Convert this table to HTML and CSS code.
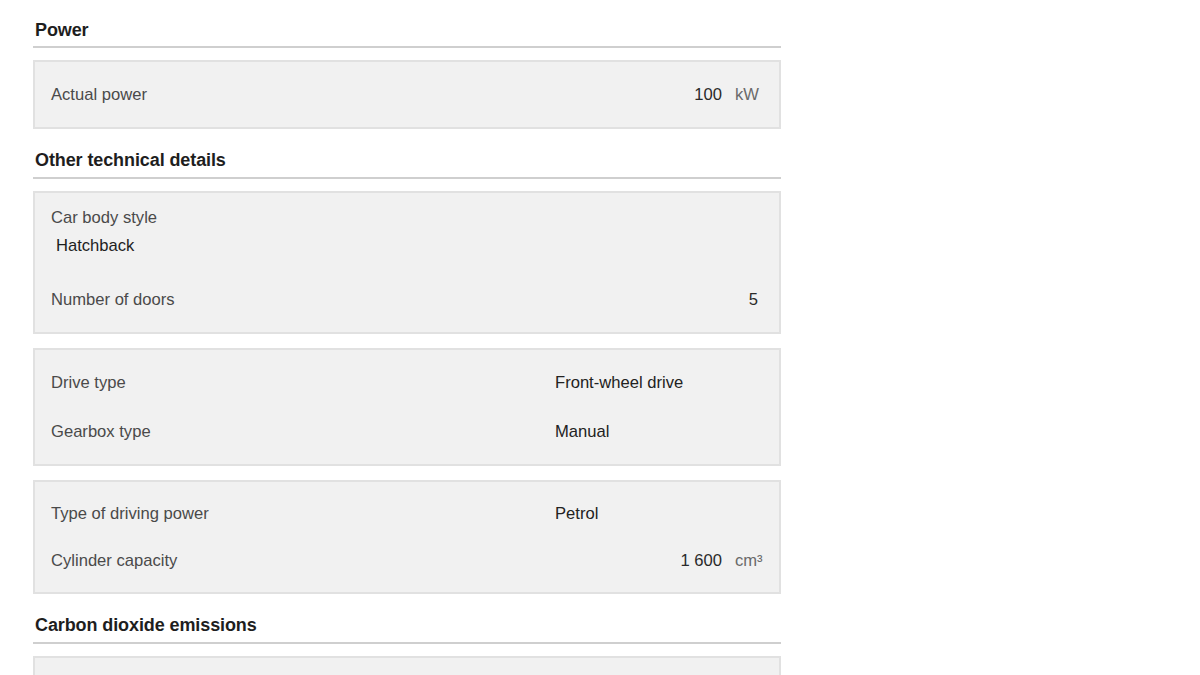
FILE: index.html
```html
<!DOCTYPE html>
<html lang="en">
<head>
<meta charset="utf-8">
<title>Technical details</title>
<link rel="stylesheet" href="styles.css">
</head>
<body>
<div class="page">
  <h2 class="section-title first">Power</h2>
  <div class="box">
    <div class="row">
      <span class="label">Actual power</span>
      <span class="num"><span class="amount">100</span><span class="unit">kW</span></span>
    </div>
  </div>

  <h2 class="section-title">Other technical details</h2>
  <div class="box">
    <div class="stacked">
      <div class="stack-label">Car body style</div>
      <div class="stack-value">Hatchback</div>
    </div>
    <div class="row">
      <span class="label">Number of doors</span>
      <span class="num"><span class="amount">5</span></span>
    </div>
  </div>
  <div class="box">
    <div class="row grid">
      <span class="label">Drive type</span>
      <span class="value">Front-wheel drive</span>
    </div>
    <div class="row grid">
      <span class="label">Gearbox type</span>
      <span class="value">Manual</span>
    </div>
  </div>
  <div class="box compact">
    <div class="row grid">
      <span class="label">Type of driving power</span>
      <span class="value">Petrol</span>
    </div>
    <div class="row">
      <span class="label">Cylinder capacity</span>
      <span class="num"><span class="amount">1 600</span><span class="unit">cm³</span></span>
    </div>
  </div>

  <h2 class="section-title">Carbon dioxide emissions</h2>
  <div class="box">
    <div class="row">
      <span class="label">&nbsp;</span>
    </div>
  </div>
</div>
</body>
</html>
```

FILE: styles.css
```css
html, body {
  margin: 0;
  padding: 0;
  background: #ffffff;
}

body {
  font-family: "Liberation Sans", Arial, sans-serif;
  font-size: 16.6px;
  color: #333333;
}

.page {
  width: 748px;
  margin-left: 33px;
  padding-top: 16px;
}

.section-title {
  margin: 18px 0 12px 0;
  padding: 1px 0 5px 2px;
  font-size: 18px;
  line-height: 24px;
  font-weight: bold;
  color: #1e1e1e;
  border-bottom: 2px solid #cfcfcf;
  letter-spacing: -0.1px;
}

.section-title.first {
  margin-top: 0;
  padding-top: 2px;
  padding-bottom: 4px;
}

.box {
  background: #f1f1f1;
  border: 2px solid #e1e1e1;
  padding: 8px 21px 8px 16px;
  margin-bottom: 14px;
}

.row {
  display: flex;
  align-items: center;
  justify-content: space-between;
  height: 49px;
}

.box.compact .row {
  height: 47px;
}

.row.grid {
  display: grid;
  grid-template-columns: 504px 1fr;
  justify-content: stretch;
}

.label {
  color: #4a4a4a;
}

.value {
  color: #222222;
}

.num {
  color: #2a2a2a;
  white-space: nowrap;
}

.unit {
  display: inline-block;
  width: 23px;
  margin-left: 13px;
  color: #6a6a6a;
  white-space: nowrap;
}

.stacked {
  padding: 3px 0 15px 0;
}

.stack-label {
  line-height: 28px;
  color: #4a4a4a;
}

.stack-value {
  line-height: 28px;
  padding-left: 5px;
  color: #1e1e1e;
}
```
